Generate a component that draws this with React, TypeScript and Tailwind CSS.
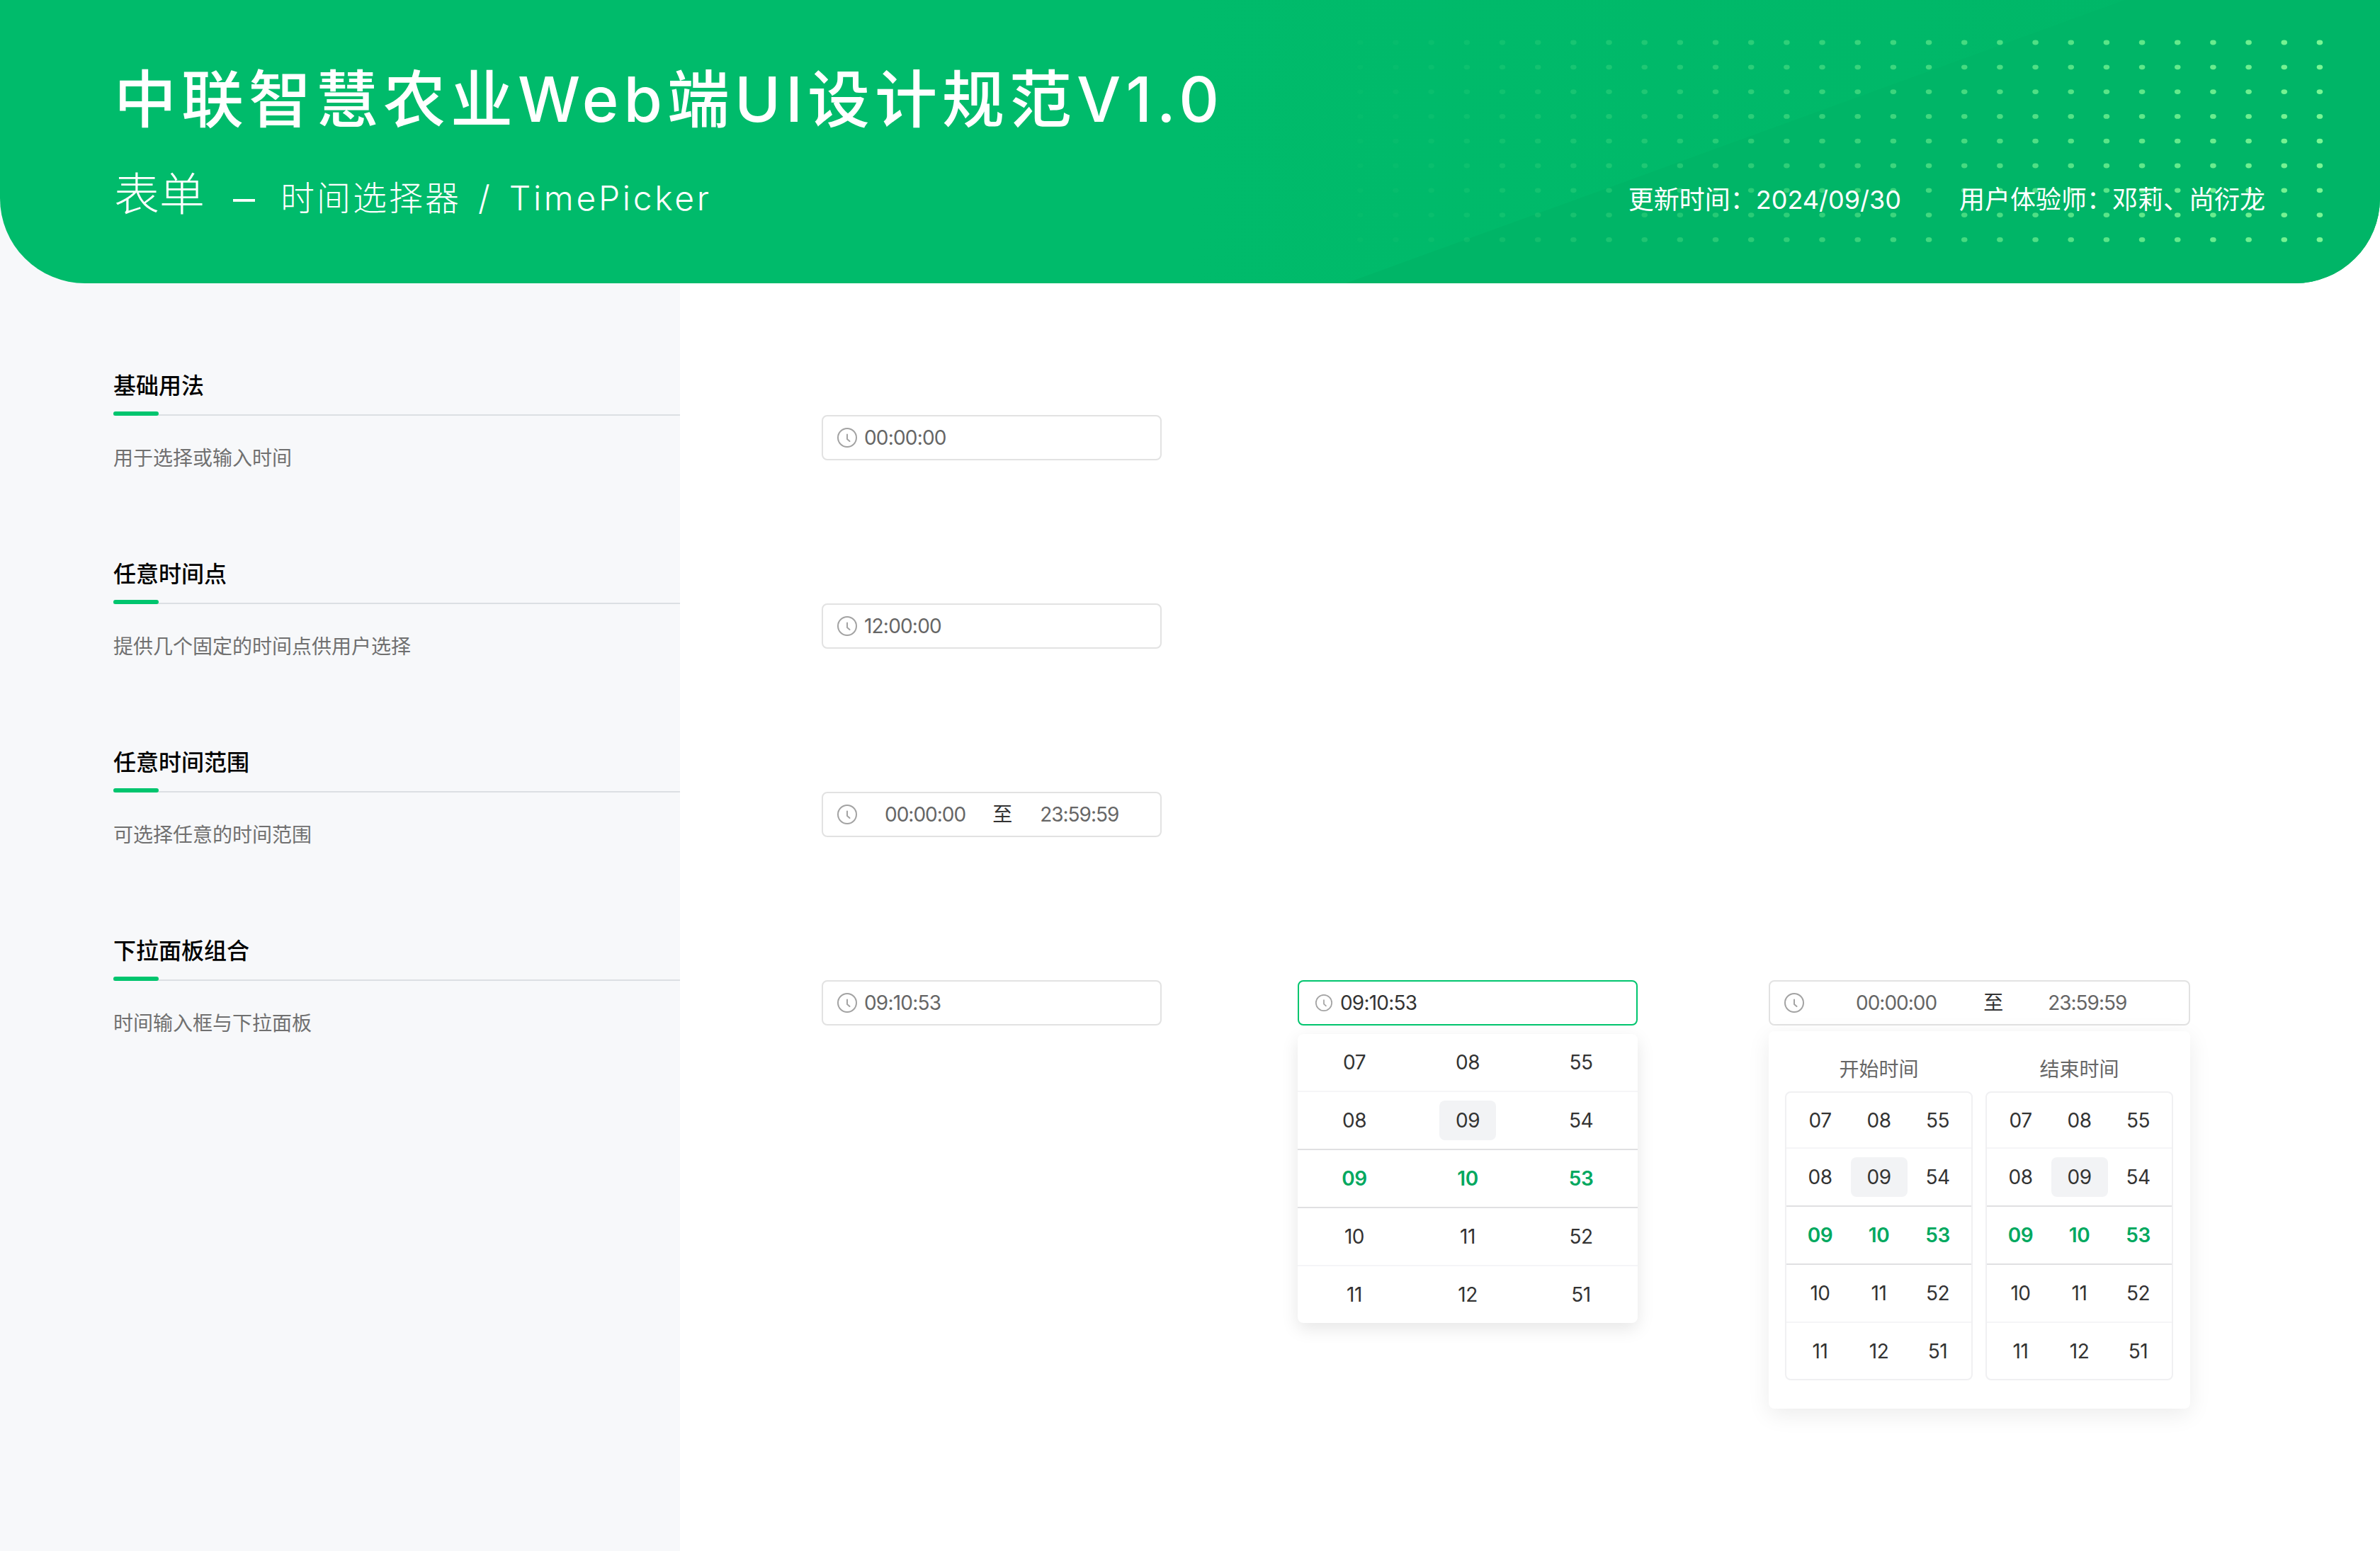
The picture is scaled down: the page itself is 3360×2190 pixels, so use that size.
const font = "font-['Inter','Noto_Sans_CJK_SC',sans-serif]";

function ClockIcon({ className }: { className: string }) {
  return (
    <svg viewBox="0 0 28 28" fill="none" className={className}>
      <circle cx="14" cy="14" r="13" stroke="#a3a3a3" strokeWidth="2" />
      <path d="M14 9.5V16l3.5 3" stroke="#a3a3a3" strokeWidth="2" strokeLinecap="round" strokeLinejoin="round" />
    </svg>
  );
}

function TimeInput({ value, active, dark }: { value: string; active?: boolean; dark?: boolean }) {
  return (
    <div className={`flex h-[64px] w-[480px] items-center rounded-[8px] border-2 bg-white ${active ? 'border-[#00c56e] pl-[23px]' : 'border-[#e2e2e2] pl-[20px]'}`}>
      <ClockIcon className={active ? 'h-[24px] w-[24px]' : 'h-[28px] w-[28px]'} />
      <span className={`text-[28px] leading-none tracking-[-0.8px] ${active ? 'ml-[11px]' : 'ml-[10px]'} ${dark ? 'text-[#333333]' : 'text-[#666666]'}`}>{value}</span>
    </div>
  );
}

function RangeInput({ width, gapA, gapB, gapC }: { width: string; gapA: string; gapB: string; gapC: string }) {
  return (
    <div className={`flex h-[64px] ${width} items-center rounded-[8px] border-2 border-[#e2e2e2] bg-white pl-[20px] text-[28px] leading-none text-[#666666]`}>
      <ClockIcon className="h-[28px] w-[28px]" />
      <span className={`${gapA} tracking-[-1px]`}>00:00:00</span>
      <span className={`${gapB} text-[#333333]`}>至</span>
      <span className={`${gapC} tracking-[-1px]`}>23:59:59</span>
    </div>
  );
}

const ROWS = [
  ['07', '08', '55'],
  ['08', '09', '54'],
  ['09', '10', '53'],
  ['10', '11', '52'],
  ['11', '12', '51'],
];

function Wheel({ inset }: { inset?: boolean }) {
  return (
    <div className="flex flex-col">
      {ROWS.map((row, i) => {
        const line = i === 4 ? '' : i === 1 || i === 2 ? 'border-b-2 border-[#e0e0e2]' : 'border-b-2 border-[#f5f5f7]';
        const height = inset ? (i === 0 || i === 4 ? 'h-[79px]' : 'h-[82px]') : i === 4 ? 'h-[80px]' : 'h-[82px]';
        return (
          <div key={i} className={`grid ${height} grid-cols-3 items-center ${inset ? 'px-[6px]' : ''} ${line}`}>
            {row.map((n, j) => (
              <div key={j} className="flex justify-center">
                <span className={`flex h-[56px] w-[80px] items-center justify-center rounded-[8px] text-[28px] leading-none tracking-[-0.5px] ${i === 2 ? 'font-semibold text-[#00a85f]' : 'text-[#333333]'} ${i === 1 && j === 1 ? 'bg-[#f2f3f5]' : ''}`}>
                  {n}
                </span>
              </div>
            ))}
          </div>
        );
      })}
    </div>
  );
}

const SECTIONS = [
  ['基础用法', '用于选择或输入时间'],
  ['任意时间点', '提供几个固定的时间点供用户选择'],
  ['任意时间范围', '可选择任意的时间范围'],
  ['下拉面板组合', '时间输入框与下拉面板'],
];

function Dots() {
  const cols = Array.from({ length: 30 }, (_, i) => i);
  const rows = Array.from({ length: 9 }, (_, i) => i);
  return (
    <svg viewBox="0 0 1480 300" className="h-[300px] w-[1480px]" fill="#7af594">
      {rows.map((r) =>
        cols.map((c) => (
          <ellipse key={`${r}-${c}`} cx={5 + c * 50.17} cy={4 + r * 34.8} rx="4.3" ry="3.4" opacity={Math.pow(c / 29, 1.3)} />
        ))
      )}
    </svg>
  );
}

export default function App() {
  return (
    <div className={`flex h-[2190px] w-[3360px] flex-col overflow-hidden bg-white ${font}`}>
      <div className="h-[400px] w-full shrink-0 bg-[linear-gradient(to_right,#f7f8fa_50%,#ffffff_50%)]">
        <header className="relative flex h-[400px] w-full flex-col overflow-hidden rounded-b-[120px] bg-[linear-gradient(to_right,#00bb6b_50%,#00b768_90%)] pl-[161px]">
          <svg viewBox="0 0 3360 400" className="absolute inset-0 h-full w-full" preserveAspectRatio="none">
            <polygon points="1900,400 3000,0 3360,0 3360,400" fill="#00b567" />
          </svg>
          <div className="absolute left-[1815px] top-[56px]">
            <Dots />
          </div>
          <h1 className="relative mt-[88px] text-[88px] font-medium leading-[104px] tracking-[7px] text-white">中联智慧农业Web端UI设计规范V1.0</h1>
          <div className="relative mt-[52px] flex items-center text-white">
            <span className="-translate-y-[6px] text-[64px] font-light leading-[72px]">表单</span>
            <span className="ml-[40px] text-[62px] font-light leading-[72px]">–</span>
            <span className="ml-[36px] text-[48px] font-light leading-[72px] tracking-[3px]">时间选择器</span>
            <span className="ml-[24px] text-[48px] font-light leading-[72px]">/</span>
            <span className="ml-[27px] text-[48px] font-light leading-[72px] tracking-[3.7px]">TimePicker</span>
          </div>
          <div className="absolute right-[162px] top-[259px] flex gap-[82px] text-[36px] font-normal leading-[46px] text-white">
            <span>更新时间：2024/09/30</span>
            <span>用户体验师：邓莉、尚衍龙</span>
          </div>
        </header>
      </div>
      <div className="flex flex-1">
        <aside className="flex w-[960px] shrink-0 flex-col bg-[#f7f8fa] pl-[160px] pt-[123px]">
          {SECTIONS.map(([title, desc]) => (
            <section key={title} className="h-[266px]">
              <h2 className="text-[32px] font-medium leading-[44px] text-[#000000]">{title}</h2>
              <div className="relative mt-[18px] h-[2px] bg-[#dcdfe3]">
                <div className="absolute bottom-0 left-0 h-[6px] w-[64px] rounded-full bg-[#00c56e]" />
              </div>
              <p className="mt-[40px] text-[28px] leading-[40px] text-[#707070]">{desc}</p>
            </section>
          ))}
        </aside>
        <main className="flex flex-1 flex-col gap-[202px] pl-[200px] pt-[186px]">
          <TimeInput value="00:00:00" />
          <TimeInput value="12:00:00" />
          <RangeInput width="w-[480px]" gapA="ml-[39px]" gapB="ml-[38px]" gapC="ml-[39px]" />
          <div className="flex items-start">
            <TimeInput value="09:10:53" />
            <div className="ml-[192px] flex w-[480px] flex-col gap-[12px]">
              <TimeInput value="09:10:53" active dark />
              <div className="overflow-hidden rounded-[8px] bg-white shadow-[0_8px_24px_rgba(0,0,0,0.1)]">
                <Wheel />
              </div>
            </div>
            <div className="ml-[185px] flex w-[595px] flex-col gap-[8px]">
              <RangeInput width="w-[595px]" gapA="ml-[73px]" gapB="ml-[66px]" gapC="ml-[63px]" />
              <div className="rounded-[8px] bg-white pb-[40px] pl-[23px] pr-[24px] pt-[34px] shadow-[0_8px_32px_rgba(0,0,0,0.08)]">
                <div className="flex gap-[18px]">
                  {['开始时间', '结束时间'].map((label) => (
                    <div key={label} className="w-[265px]">
                      <div className="text-center text-[28px] leading-[40px] text-[#666666]">{label}</div>
                      <div className="mt-[11px] overflow-hidden rounded-[8px] border-2 border-[#f0f0f2]">
                        <Wheel inset />
                      </div>
                    </div>
                  ))}
                </div>
              </div>
            </div>
          </div>
        </main>
      </div>
    </div>
  );
}
